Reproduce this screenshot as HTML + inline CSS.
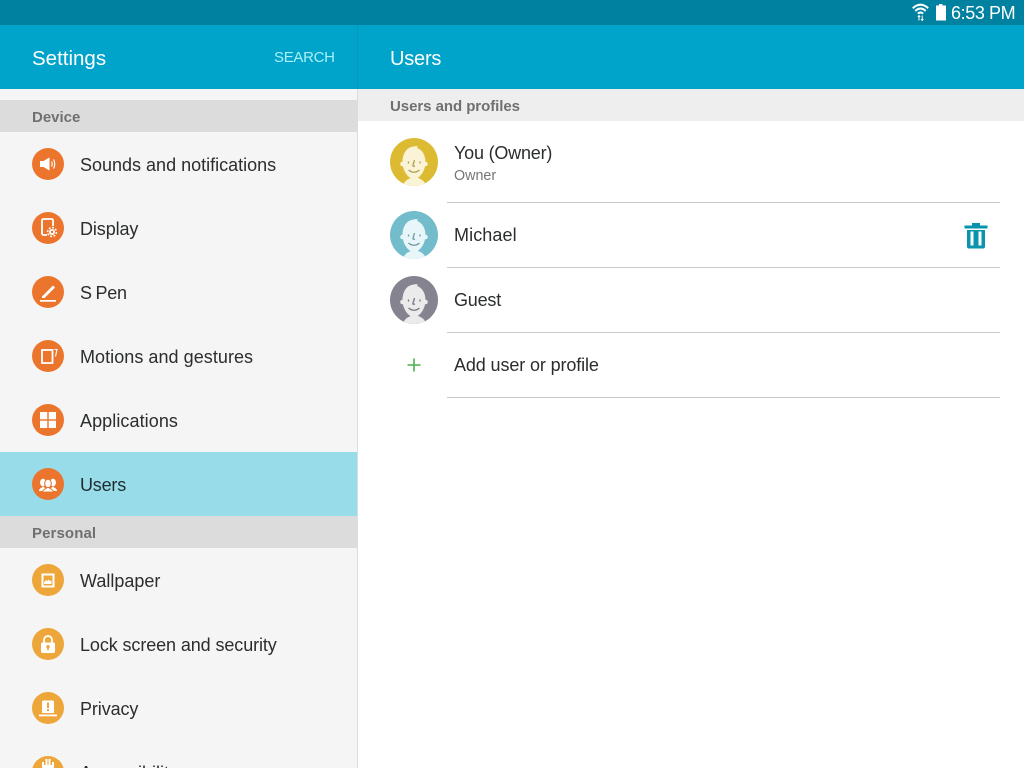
<!DOCTYPE html>
<html><head><meta charset="utf-8"><title>Settings</title>
<style>
html,body{margin:0;padding:0;width:1024px;height:768px;overflow:hidden;background:#fff;font-family:"Liberation Sans",sans-serif}
#p{position:relative;width:1024px;height:768px;overflow:hidden;background:#fff}
.a{position:absolute}
.t{position:absolute;white-space:nowrap;line-height:24px;height:24px}
.m{font-size:18px;color:#2b2d2e;left:80px}
.r{font-size:18px;color:#2b2d2e;left:454px}
.h{font-size:15px;font-weight:bold;color:#707070}
.c{position:absolute;left:32px;width:32px;height:32px}
.av{position:absolute;left:390px;width:48px;height:48px}
.ln{position:absolute;left:447px;width:553px;height:1px;background:#c9c9c9}
</style></head><body><div id="p">
<div class="a" style="left:0;top:0;width:1024px;height:25px;background:#00819f"></div>
<div class="a" style="left:0;top:25px;width:1024px;height:64px;background:#00a3c9"></div>
<div class="a" style="left:357px;top:25px;width:1px;height:64px;background:#0a94b5"></div>
<div class="a" style="left:0;top:89px;width:357px;height:679px;background:#f5f5f5"></div>
<div class="a" style="left:357px;top:89px;width:1px;height:679px;background:#dcdcdc"></div>
<div class="a" style="left:358px;top:89px;width:666px;height:32px;background:#eeeeee"></div>
<div class="a" style="left:0;top:100px;width:357px;height:32px;background:#dcdcdc"></div>
<div class="a" style="left:0;top:452px;width:357px;height:64px;background:#99dce9"></div>
<div class="a" style="left:0;top:516px;width:357px;height:32px;background:#dcdcdc"></div>

<svg class="a" style="left:911px;top:2px" width="20" height="20" viewBox="0 0 20 20" fill="none" stroke="#fff"><path d="M1.800 6.200Q9.500-0.800 17.200 6.200" stroke-width="2"/><path d="M4.300 9Q9.500 4.200 14.700 9" stroke-width="2"/><path d="M6.900 11.600Q9.500 9.200 12.100 11.600" stroke-width="2"/><path d="M8 13.500v5M6.800 15l1.200-1.500 1.200 1.500M11.200 13.500v5M10 17l1.200 1.500 1.200-1.500" stroke-width="1"/></svg>
<svg class="a" style="left:935px;top:3px" width="12" height="18" viewBox="0 0 12 18"><path d="M4 1h3.500v1.500H11V17.500H1V2.500H4z" fill="#fff"/></svg>
<div class="t" style="left:951px;top:1px;font-size:18px;color:#fff;letter-spacing:-.4px">6:53 PM</div>

<div class="t" style="left:32px;top:47px;font-size:20.500px;color:#fff">Settings</div>
<div class="t" style="left:274px;top:46px;font-size:15px;color:#a8f0f5;letter-spacing:-.3px">SEARCH</div>
<div class="t" style="left:390px;top:47px;font-size:20px;color:#fff;letter-spacing:-.2px">Users</div>

<div class="t h" style="left:32px;top:104px;margin-top:2px">Device</div>
<div class="t h" style="left:390px;top:93px;margin-top:2px;letter-spacing:-.05px">Users and profiles</div>
<div class="t h" style="left:32px;top:520px;margin-top:2px;letter-spacing:.1px">Personal</div>

<!-- Sounds -->
<svg class="c" style="top:148px" viewBox="0 0 32 32"><circle cx="16" cy="16" r="16" fill="#ec752d"/><path d="M8 13h3.500L17.500 9.500V22.500L11.500 19H8z" fill="#fff"/><path d="M19.500 13.500Q21 16 19.500 18.500M21.500 11.500Q24 16 21.500 20.500" stroke="#fff" stroke-width="1.200" fill="none"/></svg>
<div class="t m" style="top:153px">Sounds and notifications</div>
<!-- Display -->
<svg class="c" style="top:212px" viewBox="0 0 32 32"><circle cx="16" cy="16" r="16" fill="#ec752d"/><path d="M15 23h-3.500a1.500 1.500 0 0 1-1.500-1.500v-13A1.500 1.500 0 0 1 11.500 7h8A1.500 1.500 0 0 1 21 8.500V14" stroke="#fff" stroke-width="1.800" fill="none"/><circle cx="20" cy="20" r="3" fill="#fff"/><circle cx="20" cy="20" r="4.400" fill="none" stroke="#fff" stroke-width="1.600" stroke-dasharray="1.800 1.650"/><circle cx="20" cy="20" r="1.200" fill="#ec752d"/></svg>
<div class="t m" style="top:217px;letter-spacing:-.1px">Display</div>
<!-- S Pen -->
<svg class="c" style="top:276px" viewBox="0 0 32 32"><circle cx="16" cy="16" r="16" fill="#ec752d"/><path d="M10 20.500L21 9.500L23 11.500L12.500 22H10z" fill="#fff"/><rect x="8" y="24" width="16" height="1.700" fill="#fff"/></svg>
<div class="t m" style="top:281px;letter-spacing:-.25px;word-spacing:-1px">S Pen</div>
<!-- Motions -->
<svg class="c" style="top:340px" viewBox="0 0 32 32"><circle cx="16" cy="16" r="16" fill="#ec752d"/><rect x="10" y="10" width="10.500" height="13" fill="none" stroke="#fff" stroke-width="1.800"/><path d="M22.500 9.500h2.500l-1.500 7" stroke="#fff" stroke-width="1.100" fill="none"/></svg>
<div class="t m" style="top:345px;letter-spacing:.05px">Motions and gestures</div>
<!-- Applications -->
<svg class="c" style="top:404px" viewBox="0 0 32 32"><circle cx="16" cy="16" r="16" fill="#ec752d"/><rect x="8" y="8" width="7.300" height="7.300" fill="#fff"/><rect x="16.700" y="8" width="7.300" height="7.300" fill="#fff"/><rect x="8" y="16.700" width="7.300" height="7.300" fill="#fff"/><rect x="16.700" y="16.700" width="7.300" height="7.300" fill="#fff"/></svg>
<div class="t m" style="top:409px;letter-spacing:.08px">Applications</div>
<!-- Users -->
<svg class="c" style="top:468px" viewBox="0 0 32 32"><circle cx="16" cy="16" r="16" fill="#ec752d"/><ellipse cx="11" cy="14.500" rx="3" ry="3.800" fill="#fff"/><ellipse cx="21" cy="14.500" rx="3" ry="3.800" fill="#fff"/><path d="M7 23c0-2.500 2.500-3 4-4.500 1.500 1 3 2 3 4.500zM25 23c0-2.500-2.500-3-4-4.500-1.500 1-3 2-3 4.500z" fill="#fff"/><ellipse cx="16" cy="15.500" rx="3.300" ry="4.300" fill="#fff" stroke="#ec752d" stroke-width="1.100"/><path d="M10.500 24c0-2.500 3.500-3 4.500-4.500h2c1 1.500 4.500 2 4.500 4.500z" fill="#fff" stroke="#ec752d" stroke-width="1"/></svg>
<div class="t m" style="top:473px;color:#1f2d33;letter-spacing:-.2px">Users</div>
<!-- Wallpaper -->
<svg class="c" style="top:564px" viewBox="0 0 32 32"><circle cx="16" cy="16" r="16" fill="#eda63a"/><rect x="9.500" y="9.500" width="13" height="14" fill="#fff"/><rect x="11.500" y="11.500" width="9" height="10" fill="#eda63a"/><path d="M12 18.500l2-2.500 1.500 1 1-1.500 1.500 1.500 1.500-.5V20H12z" fill="#fff"/></svg>
<div class="t m" style="top:569px">Wallpaper</div>
<!-- Lock -->
<svg class="c" style="top:628px" viewBox="0 0 32 32"><circle cx="16" cy="16" r="16" fill="#eda63a"/><path d="M12 15v-3a4 4 0 0 1 8 0v3" stroke="#fff" stroke-width="1.800" fill="none"/><rect x="9" y="14.500" width="14" height="10.500" rx="1.500" fill="#fff"/><circle cx="16" cy="18.700" r="1.700" fill="#eda63a"/><rect x="15.200" y="19" width="1.600" height="3.200" fill="#eda63a"/></svg>
<div class="t m" style="top:633px;letter-spacing:-.1px">Lock screen and security</div>
<!-- Privacy -->
<svg class="c" style="top:692px" viewBox="0 0 32 32"><circle cx="16" cy="16" r="16" fill="#eda63a"/><path d="M10 21V10a1.500 1.500 0 0 1 1.500-1.500h9A1.500 1.500 0 0 1 22 10V21z" fill="#fff"/><rect x="7" y="22.500" width="18" height="1.800" fill="#fff"/><rect x="15" y="10.500" width="2" height="5.500" fill="#eda63a"/><rect x="15" y="17" width="2" height="2" fill="#eda63a"/></svg>
<div class="t m" style="top:697px;letter-spacing:-.1px">Privacy</div>
<!-- Accessibility -->
<svg class="c" style="top:756px" viewBox="0 0 32 32"><circle cx="16" cy="16" r="16" fill="#eda63a"/><path d="M11 10V6M14.500 9V3M17.500 9V3M21 10V6" stroke="#fff" stroke-width="2"/><rect x="10" y="9" width="12" height="8" fill="#fff"/></svg>
<div class="t m" style="top:761px">Accessibility</div>

<!-- Avatars -->
<svg class="av" style="top:138px" viewBox="0 0 48 48"><defs><clipPath id="k1"><circle cx="24" cy="24" r="24"/></clipPath></defs><g clip-path="url(#k1)"><rect width="48" height="48" fill="#dcbb33"/><path d="M13 48c1-5 5-7 8-8l1-4h5l1 4c3 1 7 3 8 8z" fill="#faf3d6"/><circle cx="12.500" cy="26" r="2.300" fill="#faf3d6"/><circle cx="35.500" cy="26" r="2.300" fill="#faf3d6"/><path d="M12.500 24c0-8 4-14 9-15 2-.5 4-1 6.500-.5l-1 1.500c5 1.500 8.500 7 8.500 14 0 9-6 17-11.500 17S12.500 33 12.500 24z" fill="#faf3d6"/><path d="M24.500 22c-.5 3-2 5-1.500 6l2 .3M18.500 23.500v2M30 23.500v2M18.500 32q5.500 4.500 11 0" stroke="#b0a052" stroke-width="1.300" fill="none"/></g></svg>
<svg class="av" style="top:211px" viewBox="0 0 48 48"><defs><clipPath id="k2"><circle cx="24" cy="24" r="24"/></clipPath></defs><g clip-path="url(#k2)"><rect width="48" height="48" fill="#72bccb"/><path d="M13 48c1-5 5-7 8-8l1-4h5l1 4c3 1 7 3 8 8z" fill="#e8f6f9"/><circle cx="12.500" cy="26" r="2.300" fill="#e8f6f9"/><circle cx="35.500" cy="26" r="2.300" fill="#e8f6f9"/><path d="M12.500 24c0-8 4-14 9-15 2-.5 4-1 6.500-.5l-1 1.500c5 1.500 8.500 7 8.500 14 0 9-6 17-11.500 17S12.500 33 12.500 24z" fill="#e8f6f9"/><path d="M24.500 22c-.5 3-2 5-1.500 6l2 .3M18.500 23.500v2M30 23.500v2M18.500 32q5.500 4.500 11 0" stroke="#6f9aa3" stroke-width="1.300" fill="none"/></g></svg>
<svg class="av" style="top:276px" viewBox="0 0 48 48"><defs><clipPath id="k3"><circle cx="24" cy="24" r="24"/></clipPath></defs><g clip-path="url(#k3)"><rect width="48" height="48" fill="#85838f"/><path d="M13 48c1-5 5-7 8-8l1-4h5l1 4c3 1 7 3 8 8z" fill="#ebebeb"/><circle cx="12.500" cy="26" r="2.300" fill="#ebebeb"/><circle cx="35.500" cy="26" r="2.300" fill="#ebebeb"/><path d="M12.500 24c0-8 4-14 9-15 2-.5 4-1 6.500-.5l-1 1.500c5 1.500 8.500 7 8.500 14 0 9-6 17-11.500 17S12.500 33 12.500 24z" fill="#ebebeb"/><path d="M24.500 22c-.5 3-2 5-1.500 6l2 .3M18.500 23.500v2M30 23.500v2M18.500 32q5.500 4.500 11 0" stroke="#77757f" stroke-width="1.300" fill="none"/></g></svg>

<div class="t r" style="top:141px;letter-spacing:-.2px">You (Owner)</div>
<div class="t" style="left:454px;top:164px;font-size:14.300px;color:#757575">Owner</div>
<div class="ln" style="top:202px"></div>
<div class="t r" style="top:223px;letter-spacing:.1px">Michael</div>
<svg class="a" style="left:964px;top:222px" width="24" height="28" viewBox="0 0 24 28" fill="#0a93ac"><rect x="8" y="1" width="8" height="2.500"/><rect x="0.500" y="3.500" width="23" height="3"/><path d="M3 8h18v16.500a2 2 0 0 1-2 2H5a2 2 0 0 1-2-2zM6.500 9.500v14h3v-14zM14.500 9.500v14h3v-14z" fill-rule="evenodd"/></svg>
<div class="ln" style="top:267px"></div>
<div class="t r" style="top:288px;letter-spacing:-.2px">Guest</div>
<div class="ln" style="top:332px"></div>
<svg class="a" style="left:406px;top:357px" width="16" height="16" viewBox="0 0 16 16"><path d="M8 1.500v13M1.500 8h13" stroke="#4caf50" stroke-width="1.600"/></svg>
<div class="t r" style="top:353px;letter-spacing:-.12px">Add user or profile</div>
<div class="ln" style="top:397px"></div>
</div></body></html>
